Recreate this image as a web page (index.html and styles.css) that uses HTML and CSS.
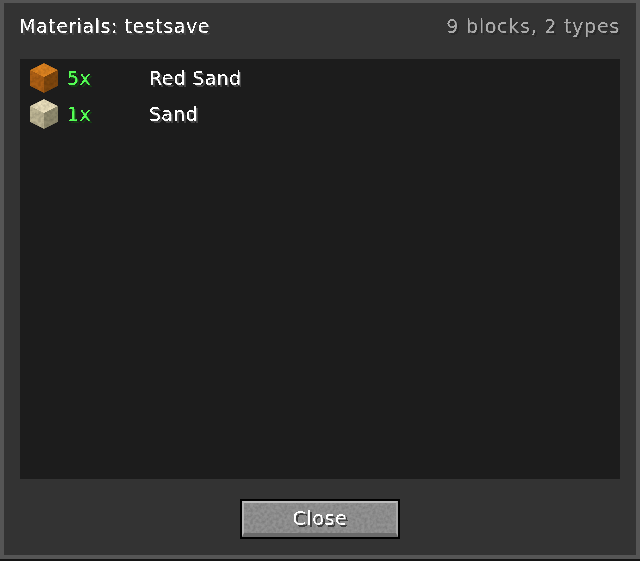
FILE: index.html
```html
<!DOCTYPE html>
<html lang="en">
<head>
<meta charset="utf-8">
<title>Materials: testsave</title>
<link rel="stylesheet" href="styles.css">
</head>
<body>
<svg class="defs" width="0" height="0" aria-hidden="true">
  <defs>
    <filter id="crisp" x="-5%" y="-20%" width="110%" height="140%" color-interpolation-filters="sRGB">
      <feComponentTransfer><feFuncA type="discrete" tableValues="0 0 1 1"/></feComponentTransfer>
    </filter>
    <filter id="grain-soft" x="0" y="0" width="100%" height="100%" color-interpolation-filters="sRGB">
      <feTurbulence type="fractalNoise" baseFrequency="0.35" numOctaves="2" seed="9" result="n"/>
      <feColorMatrix in="n" type="matrix" values="0 0 0 0 0  0 0 0 0 0  0 0 0 0 0  0.3 0 0 0 -0.1" result="d"/>
      <feComposite in="d" in2="SourceGraphic" operator="over"/>
    </filter>
    <clipPath id="cube-clip"><path d="M14 0 28 7V23L14 30 0 23V7Z"/></clipPath>
  </defs>
</svg>
<main class="panel">
  <header class="head">
    <h1 class="title">Materials: testsave</h1>
    <span class="summary">9 blocks, 2 types</span>
  </header>
  <section class="list">
    <div class="row">
      <svg class="cube" viewBox="0 0 28 30" width="28" height="30" shape-rendering="crispEdges">
        <g clip-path="url(#cube-clip)" filter="url(#grain-soft)">
          <path fill="#dc8220" d="M14 0 28 7 14 14 0 7Z"/>
          <path fill="#ab5e14" d="M0 7 14 14V30L0 23Z"/>
          <path fill="#7e460d" d="M28 7 14 14V30L28 23Z"/>
        </g>
      </svg>
      <span class="count">5x</span>
      <span class="name">Red Sand</span>
    </div>
    <div class="row">
      <svg class="cube" viewBox="0 0 28 30" width="28" height="30" shape-rendering="crispEdges">
        <g clip-path="url(#cube-clip)" filter="url(#grain-soft)">
          <path fill="#eadfbc" d="M14 0 28 7 14 14 0 7Z"/>
          <path fill="#bdb594" d="M0 7 14 14V30L0 23Z"/>
          <path fill="#8f8a6e" d="M28 7 14 14V30L28 23Z"/>
        </g>
      </svg>
      <span class="count">1x</span>
      <span class="name">Sand</span>
    </div>
  </section>
  <footer class="foot">
    <button class="close" type="button">
      <svg class="close-bg" width="156" height="36" shape-rendering="crispEdges" aria-hidden="true">
        <rect width="156" height="36" fill="#939393" filter="url(#grain-soft)"/>
      </svg>
      <span class="close-label">Close</span>
    </button>
  </footer>
</main>
</body>
</html>
```
FILE: styles.css
```css
html, body {
  margin: 0;
  padding: 0;
  background: #141414;
}
body {
  width: 640px;
  height: 561px;
  overflow: hidden;
  font-family: "DejaVu Sans", sans-serif;
  font-size: 19px;
}
.defs {
  display: block;
  height: 0;
}
.panel {
  box-sizing: border-box;
  width: 640px;
  height: 559px;
  display: flex;
  flex-direction: column;
  padding: 0 16px;
  background: #333333;
  border: solid #555555;
  border-width: 3px 4px 4px;
}
.head {
  height: 56px;
  flex: none;
  display: flex;
  justify-content: space-between;
  align-items: center;
  padding-bottom: 10px;
  box-sizing: border-box;
}
.title,
.summary,
.count,
.name,
.close-label {
  filter: url(#crisp);
  line-height: 20px;
}
.title {
  margin: 0 0 0 -1px;
  font-size: 19px;
  font-weight: normal;
  letter-spacing: 0.55px;
  color: #ffffff;
  text-shadow: 2px 2px 0 #454545;
}
.summary {
  letter-spacing: 0.75px;
  color: #aaaaaa;
  text-shadow: 2px 2px 0 #2a2a2a;
}
.list {
  flex: 1;
  display: flex;
  flex-direction: column;
  padding-top: 1px;
  background: #1c1c1c;
}
.row {
  height: 36px;
  flex: none;
  display: flex;
  align-items: center;
  padding-left: 10px;
}
.cube {
  flex: none;
}
.count {
  width: 82px;
  margin-left: 9px;
  letter-spacing: 0.5px;
  color: #55ff55;
  text-shadow: 2px 2px 0 #153f15;
}
.name {
  letter-spacing: 0.3px;
  color: #ffffff;
  text-shadow: 2px 2px 0 #454545;
}
.foot {
  height: 76px;
  flex: none;
  display: flex;
  align-items: center;
  justify-content: center;
  padding-top: 4px;
  box-sizing: border-box;
}
.close {
  position: relative;
  box-sizing: border-box;
  width: 160px;
  height: 40px;
  padding: 0 0 2px;
  background: #939393;
  border: 2px solid #000000;
  font: inherit;
  overflow: hidden;
}
.close::after {
  content: "";
  position: absolute;
  inset: 0;
  border: solid;
  border-color: #bdbdbd #a8a8a8 #6a6a6a #b4b4b4;
  border-width: 2px 2px 4px;
}
.close-bg {
  position: absolute;
  left: 0;
  top: 0;
  display: block;
}
.close-label {
  position: relative;
  z-index: 1;
  letter-spacing: 0.6px;
  color: #ffffff;
  text-shadow: 2px 2px 0 #3f3f3f;
}
```
